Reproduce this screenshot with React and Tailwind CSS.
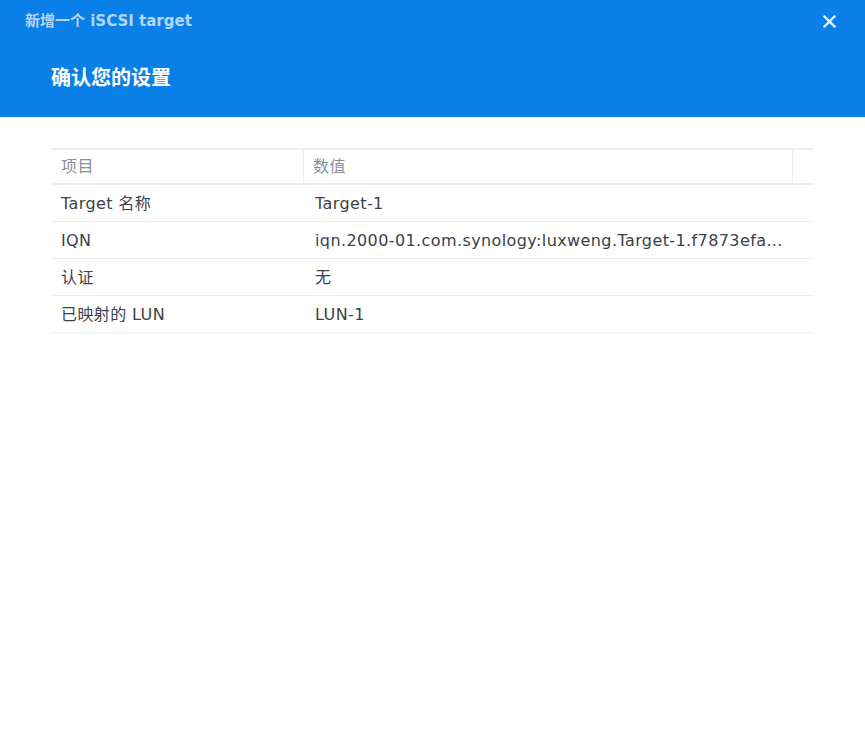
export default function App() {
  const rows = [
    ["Target 名称", "Target-1"],
    ["IQN", "iqn.2000-01.com.synology:luxweng.Target-1.f7873efa..."],
    ["认证", "无"],
    ["已映射的 LUN", "LUN-1"],
  ];
  const font = { fontFamily: '"DejaVu Sans", "Noto Sans CJK SC", sans-serif' };
  return (
    <div className="w-[865px] h-[749px] bg-white" style={font}>
      <div className="h-[117px] bg-[#0a7fe8] relative">
        <div className="pt-[11px] pl-[25px] text-[15px] font-bold text-[#b3d6fa] leading-[20px]">新增一个 iSCSI target</div>
        <div className="pt-[34px] pl-[51px] text-[20px] font-bold text-white leading-[26px]">确认您的设置</div>
        <svg className="absolute left-[823px] top-[15px]" width="13" height="13" viewBox="0 0 13 13">
          <path d="M1.5 1.5 L11.5 11.5 M11.5 1.5 L1.5 11.5" stroke="#e6f1fc" strokeWidth="2.4" strokeLinecap="square" />
        </svg>
      </div>
      <div className="pt-[31px] px-[51px]">
        <div className="border-t-2 border-[#e8edf2]">
          <div className="flex h-[35px] border-b-2 border-[#e8edf2] text-[16px] text-[#8a8f96] tracking-[0.4px]">
            <div className="w-[253px] pl-[10px] pt-[1px] flex items-center border-r border-[#e8edf2]">项目</div>
            <div className="w-[489px] pl-[9px] pt-[1px] flex items-center border-r border-[#e8edf2]">数值</div>
            <div className="flex-1"></div>
          </div>
          {rows.map(([a, b]) => (
            <div key={a} className="flex h-[37px] pt-[2px] border-b border-[#e8edf2] text-[16px] text-[#3c4148] tracking-[0.4px]">
              <div className="w-[253px] pl-[10px] flex items-center">{a}</div>
              <div className="pl-[11px] flex items-center whitespace-nowrap">{b}</div>
            </div>
          ))}
        </div>
      </div>
    </div>
  );
}
